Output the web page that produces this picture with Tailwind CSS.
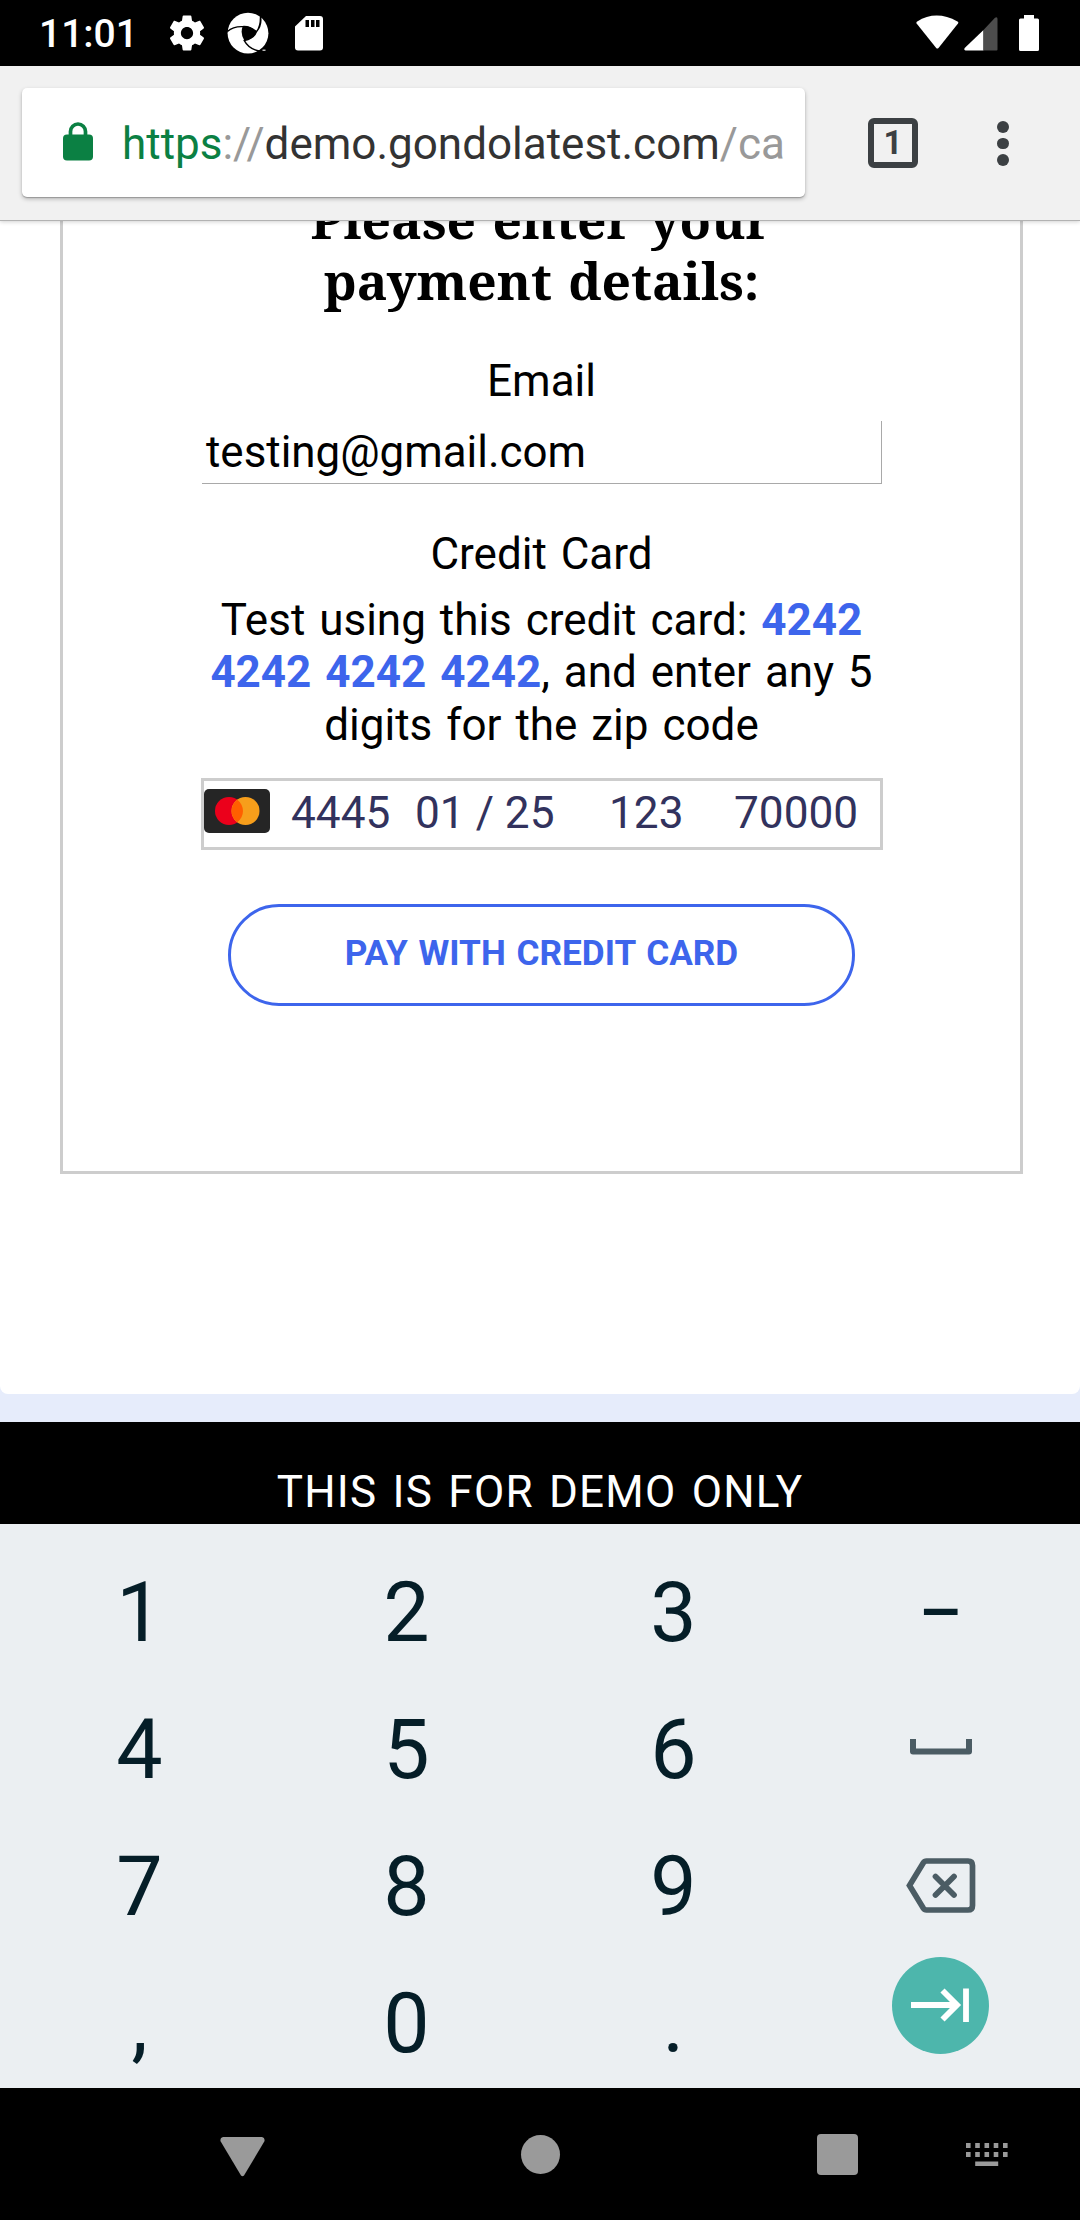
<!DOCTYPE html>
<html lang="en">
<head>
<meta charset="utf-8">
<title>Payment details</title>
<script src="https://cdn.jsdelivr.net/npm/@tailwindcss/browser@4"></script>
</head>
<body class="bg-black">
<div class="flex h-[2220px] w-[1080px] flex-col overflow-hidden font-['Roboto',sans-serif]">

  <!-- Status bar -->
  <header class="flex h-[66px] shrink-0 items-start bg-black text-white">
    <span class="ml-[39px] w-[131px] pt-px text-[39px] leading-[66px] font-medium">11:01</span>
    <svg class="mt-[12px] -ml-[4.5px] h-[42px] w-[42px]" viewBox="0 0 24 24" fill="currentColor"><path d="M19.43 12.98c.04-.32.07-.64.07-.98s-.03-.66-.07-.98l2.11-1.65c.19-.15.24-.42.12-.64l-2-3.46c-.12-.22-.39-.3-.61-.22l-2.49 1c-.52-.4-1.08-.73-1.69-.98l-.38-2.65C14.46 2.18 14.25 2 14 2h-4c-.25 0-.46.18-.49.42l-.38 2.65c-.61.25-1.17.59-1.69.98l-2.49-1c-.23-.09-.49 0-.61.22l-2 3.46c-.13.22-.07.49.12.64l2.11 1.65c-.04.32-.07.65-.07.98s.03.66.07.98l-2.11 1.65c-.19.15-.24.42-.12.64l2 3.46c.12.22.39.3.61.22l2.49-1c.52.4 1.08.73 1.69.98l.38 2.65c.03.24.24.42.49.42h4c.25 0 .46-.18.49-.42l.38-2.65c.61-.25 1.17-.59 1.69-.98l2.49 1c.23.09.49 0 .61-.22l2-3.46c.12-.22.07-.49-.12-.64l-2.11-1.65zM12 15.5c-1.93 0-3.5-1.57-3.5-3.5s1.570-3.500 3.500-3.500 3.500 1.570 3.500 3.500-1.570 3.500-3.500 3.500z"/></svg>
    <svg class="mt-[12px] ml-[19px] h-[42px] w-[42px]" viewBox="0 0 42 42">
      <circle cx="21" cy="21.2" r="20.4" fill="#fff"/>
      <path d="M15.6 14.6Q23 13 29.4 19.8Q27.500 26.500 17.300 28.600Q13 21.500 15.600 14.600z"/>
      <path d="M.4 19.500Q6 14.300 15.600 14.600Q23 14 29.400 19.800M33.400 4Q35.300 13 29.400 19.800Q27 26.500 17.300 28.600Q22 37.500 33.500 39.200M29.400 19.800Q33.500 15 33.500 5" fill="none" stroke="#000" stroke-width="1.4"/>
      <path d="M35.500 37.500h3v1.500h-3z" fill="#bbb"/>
    </svg>
    <svg class="mt-[16px] ml-[26px] h-[35px] w-[28px]" viewBox="0 0 28 35"><path d="M11 0H25Q28 0 28 3V31.500Q28 34.500 25 34.500H3Q0 34.500 0 31.500V10.500z" fill="#fff"/><path d="M10.500 4h3.500v7h-3.500zM16 4h3.500v7h-3.500zM21 4h3.500v7h-3.500z"/></svg>
    <svg class="mt-[15px] ml-auto h-[34px] w-[43px]" viewBox="0 0 43 34"><path d="M.6 8.500Q0 7.200 1.200 6.400Q20 -5.500 41.500 6.400Q42.800 7.200 42 8.500L22.500 33Q21.300 34 20.200 33z" fill="#fff"/></svg>
    <svg class="mt-[17px] ml-[5px] h-[34px] w-[34px]" viewBox="0 0 34 34"><path d="M19.500 13V33.500H1.500Q-.5 33 .7 31z" fill="#fff"/><path d="M19.500 13L31 .7Q33.500 -.5 33.500 2V32.500Q33.500 33.500 32.500 33.500H19.500z" fill="#4d4d4d"/></svg>
    <svg class="mt-[15px] mr-[41px] ml-[21px] h-[36px] w-[20px]" viewBox="0 0 20 36"><path d="M5 0H15V3.500H18.500Q20 3.500 20 5V34.500Q20 36 18.500 36H1.500Q0 36 0 34.500V5Q0 3.500 1.500 3.500H5z" fill="#fff"/></svg>
  </header>

  <!-- Browser toolbar -->
  <nav class="z-10 flex h-[154px] shrink-0 items-start bg-[#f1f1f1] shadow-[0_1px_0_#b2b2b2,0_2px_4px_rgba(0,0,0,0.18)]">
    <div class="mt-[22px] ml-[22px] flex h-[109px] w-[783px] items-start rounded-[5px] bg-white shadow-[0_1px_1px_rgba(0,0,0,0.22),0_2px_4px_rgba(0,0,0,0.25)]">
      <svg class="mt-[34px] ml-[41px] h-[39px] w-[30px]" viewBox="0 0 30 39"><path d="M7.500 14V9.500a7.500 7.500 0 0 1 15 0V14" fill="none" stroke="#0b8043" stroke-width="3.700"/><rect y="12.600" width="30" height="26" rx="4" fill="#0b8043"/></svg>
      <p class="ml-[29px] text-[44px] leading-[112px] whitespace-nowrap text-[#333]"><span class="text-[#0b8043]">https</span><span class="text-[#999]">://</span>demo.gondolatest.com<span class="text-[#999]">/ca</span></p>
    </div>
    <div class="mt-[52px] ml-[63px] flex h-[50px] w-[50px] items-center justify-center rounded-[6px] border-[6px] border-[#3c4043] text-[33px] font-bold text-[#3c4043]">1</div>
    <div class="mt-[55px] ml-[79px] flex flex-col gap-[5px]">
      <i class="size-[11.500px] rounded-full bg-[#3c4043]"></i>
      <i class="size-[11.500px] rounded-full bg-[#3c4043]"></i>
      <i class="size-[11.500px] rounded-full bg-[#3c4043]"></i>
    </div>
  </nav>

  <!-- Page -->
  <main class="h-[1202px] shrink-0 bg-[#e6ecfb] text-black [word-spacing:3px]">
    <div class="h-[1174px] overflow-hidden rounded-b-[8px] bg-white pl-[60px]">
      <form class="flex h-[954px] w-[963px] flex-col items-center border-x-3 border-b-3 border-[#cdcdcd]">
        <h3 class="-mt-[31px] text-center font-['Noto_Serif',serif] text-[51.480px] leading-[61px] font-bold">Please enter your<br>payment details:</h3>
        <label class="mt-[44px] text-[44px] leading-[52px]">Email</label>
        <div class="mt-[14px] h-[63px] w-[680px] border-r border-b border-[#a9a9a9] pl-[4.500px] text-[43.900px] leading-[62px]">testing@gmail.com</div>
        <label class="mt-[44px] text-[44px] leading-[52px]">Credit Card</label>
        <p class="mt-[14px] text-center text-[44px] leading-[52.300px]">Test using this credit card: <b class="text-[#3d65ec]">4242<br>4242 4242 4242</b>, and enter any 5<br>digits for the zip code</p>
        <div class="mt-[27px] ml-px flex h-[72px] w-[682px] items-start border-3 border-[#cdcdcd] text-[44.200px] leading-[63px] whitespace-nowrap text-[#32325d] [word-spacing:0]">
          <svg class="mt-[8px] -ml-[0.500px] h-[44px] w-[66px] shrink-0" viewBox="0 0 66 44"><rect width="66" height="44" rx="5" fill="#252525"/><circle cx="25" cy="22" r="14" fill="#eb001b"/><circle cx="41.500" cy="22" r="14" fill="#f79e1b"/><path d="M33.250 10.700a14 14 0 0 1 0 22.600a14 14 0 0 1 0-22.600z" fill="#ff5f00"/></svg>
          <span class="ml-[21.500px] w-[124px] pt-px">4445</span>
          <span class="w-[194px] pt-px">01 / 25</span>
          <span class="w-[125px] pt-px">123</span>
          <span class="pt-px">70000</span>
        </div>
        <button type="button" class="mt-[54px] h-[102px] w-[627px] rounded-[51px] border-3 border-[#3d65ec] pb-[5px] text-[35.200px] leading-[93px] font-bold text-[#3d65ec] [word-spacing:2px]">PAY WITH CREDIT CARD</button>
      </form>
    </div>
  </main>
  <footer class="flex h-[102px] shrink-0 justify-center bg-black pt-[44px] text-[44px] leading-[52px] tracking-[1.250px] text-white [word-spacing:3px]">THIS IS FOR DEMO ONLY</footer>

  <!-- Numeric keyboard -->
  <section class="grid h-[564px] shrink-0 auto-rows-[137px] grid-cols-[repeat(4,267px)] justify-items-center overflow-hidden bg-[#ebeff2] pt-[20px] pl-[6px] text-[82.500px] leading-[137px] text-[#051e28]">
    <span>1</span><span>2</span><span>3</span><span>−</span>
    <span>4</span><span>5</span><span>6</span>
    <svg class="mt-[57px] h-[17px] w-[62px]" viewBox="0 0 62 17"><path d="M3 1V13.500H59V1" fill="none" stroke="#4b5c64" stroke-width="6" stroke-linejoin="round"/></svg>
    <span>7</span><span>8</span><span>9</span>
    <svg class="mt-[40px] h-[55px] w-[70px]" viewBox="0 0 70 55"><path d="M20.500 3H62Q66.500 3 66.500 7.500V47.500Q66.500 52 62 52H20.500Q18.500 52 17.200 50L3.500 27.500L17.200 5Q18.500 3 20.500 3zM29.500 18.500L48 37M48 18.500L29.500 37" fill="none" stroke="#4b5c64" stroke-width="5.700" stroke-linecap="round"/></svg>
    <span>,</span><span>0</span><span>.</span>
    <svg class="mt-[2px] size-[97px]" viewBox="0 0 97 97"><circle cx="48.500" cy="48.500" r="48.500" fill="#4db6ac"/><path d="M19 48H65M50.500 33.500L65 48L50.500 62.500M74 31.500V65" fill="none" stroke="#fff" stroke-width="5.800"/></svg>
  </section>

  <!-- Navigation bar -->
  <div class="flex h-[132px] shrink-0 items-start bg-black text-[#9a9a9a]">
    <svg class="mt-[49px] ml-[220px] h-[40px] w-[45px]" viewBox="0 0 45 40" fill="currentColor"><path d="M3 0H42Q45.500 1 44.300 4.500L24 38.500Q22.500 40 21 38.500L.7 4.500Q-.5 1 3 0z"/></svg>
    <i class="mt-[47px] ml-[256px] size-[39px] rounded-full bg-[#9a9a9a]"></i>
    <i class="mt-[46px] ml-[257px] size-[41px] rounded-[4px] bg-[#9a9a9a]"></i>
    <svg class="mt-[55px] ml-[108px] h-[24px] w-[42px]" viewBox="0 0 42 24" fill="currentColor"><path d="M0 0h4.600v5h-4.600zM9.200 0h4.600v5h-4.600zM18.500 0h4.600v5h-4.600zM27.700 0h4.600v5h-4.600zM37 0h4.600v5h-4.600zM0 9h4.600v5h-4.600zM9.200 9h4.600v5h-4.600zM18.500 9h4.600v5h-4.600zM27.700 9h4.600v5h-4.600zM37 9h4.600v5h-4.600zM9.200 18.500h23v4.500h-23z"/></svg>
  </div>
</div>
</body>
</html>
